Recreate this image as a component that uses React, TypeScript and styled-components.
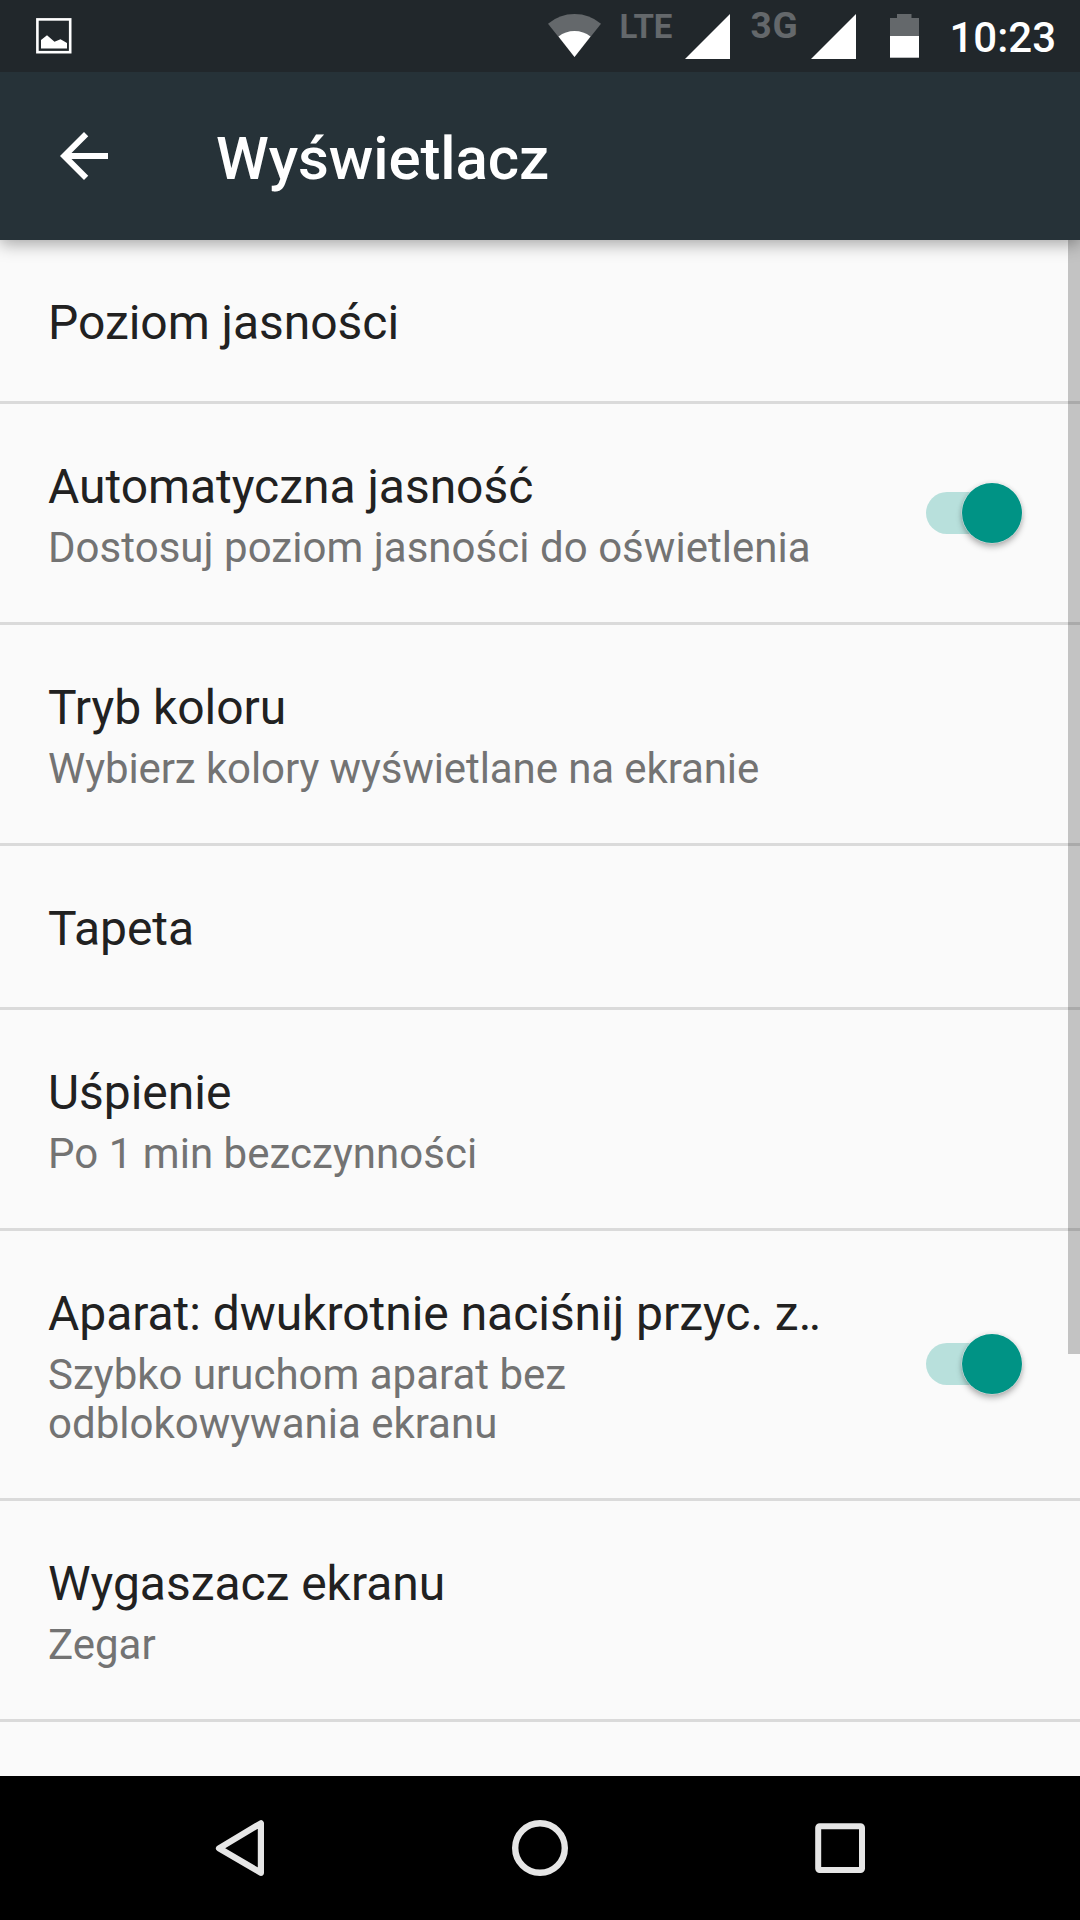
import React from 'react';
import styled, { createGlobalStyle } from 'styled-components';

const Global = createGlobalStyle`
  * { box-sizing: border-box; }
  body { margin: 0; background: #fafafa; }
  svg { display: block; flex: none; }
`;
const Screen = styled.div`
  width: 1080px; height: 1920px; display: flex; flex-direction: column;
  overflow: hidden; font-family: Roboto, sans-serif; background: #fafafa;
`;
const StatusBar = styled.header`
  height: 72px; flex: none; background: #21272b; display: flex;
  justify-content: space-between; padding: 0 24px 0 36px; position: relative; z-index: 2;
`;
const StatusGroup = styled.div`display: flex; align-items: flex-start;`;
const Network = styled.span<{ $size: number; $top: number; $left: number; $width: number; $track: number }>`
  font-size: ${p => p.$size}px; line-height: 40px; font-weight: 700; color: #64686b;
  letter-spacing: ${p => p.$track}px; margin: ${p => p.$top}px 0 0 ${p => p.$left}px;
  width: ${p => p.$width}px; white-space: nowrap;
`;
const Clock = styled.span`
  font-size: 42px; font-weight: 500; color: #fff; line-height: 49px; margin: 13px 0 0 30px;
`;
const Glyph = styled.svg<{ $top: number; $left?: number }>`
  margin-top: ${p => p.$top}px; margin-left: ${p => p.$left ?? 0}px;
`;
const Toolbar = styled.div`
  height: 168px; flex: none; background: #263238; display: flex; align-items: center;
  padding-left: 48px; box-shadow: 0 4px 16px rgba(0,0,0,.35); position: relative; z-index: 1;
`;
const Title = styled.h1`
  margin: 0 0 0 96px; padding-top: 6px; font-size: 60px; line-height: 70px; font-weight: 500;
  color: #fff; letter-spacing: -0.1px;
`;
const Body = styled.main`flex: 1; min-height: 0; overflow: hidden; position: relative;`;
const ScrollThumb = styled.div`
  position: absolute; top: 0; right: 0; width: 12px; height: 1114px; background: rgba(0,0,0,.22);
`;
const Row = styled.section<{ $h: number }>`
  height: ${p => p.$h}px; border-bottom: 3px solid #dadada; display: flex;
  align-items: center; justify-content: space-between; padding: 0 58px 0 48px;
`;
const Texts = styled.div`display: flex; flex-direction: column; gap: 8px; padding-top: 4px;`;
const Label = styled.div`font-size: 48px; line-height: 56px; color: #212121; white-space: nowrap; letter-spacing: -0.04px;`;
const Dots = styled.span`letter-spacing: -2.6px;`;
const Note = styled.div<{ $track?: number }>`
  font-size: 42px; line-height: 49px; color: #737373; white-space: pre-line;
  letter-spacing: ${p => p.$track ?? 0}px;
`;
const Track = styled.div`
  width: 96px; height: 42px; border-radius: 21px; background: #b8e0dc; flex: none;
  display: flex; align-items: center; justify-content: flex-end; margin-bottom: 1px;
`;
const Thumb = styled.div`
  width: 60px; height: 60px; border-radius: 50%; background: #009385; flex: none;
  box-shadow: 0 0 0 0.5px rgba(255,255,255,.6), 0 4px 6px rgba(0,0,0,.28), 0 0 5px rgba(0,0,0,.12);
`;
const NavBar = styled.nav`
  height: 144px; flex: none; background: #000; display: flex; align-items: center;
  justify-content: center; gap: 228px;
`;

type Item = { label: string; dots?: boolean; note?: string; track?: number; h: number; on?: boolean };
const items: Item[] = [
  { label: 'Poziom jasności', h: 164 },
  { label: 'Automatyczna jasność', note: 'Dostosuj poziom jasności do oświetlenia', track: 0.03, h: 221, on: true },
  { label: 'Tryb koloru', note: 'Wybierz kolory wyświetlane na ekranie', track: -0.1, h: 221 },
  { label: 'Tapeta', h: 164 },
  { label: 'Uśpienie', note: 'Po 1 min bezczynności', track: 0.03, h: 221 },
  { label: 'Aparat: dwukrotnie naciśnij przyc. z', dots: true, note: 'Szybko uruchom aparat bez\nodblokowywania ekranu', h: 270, on: true },
  { label: 'Wygaszacz ekranu', note: 'Zegar', h: 221 },
];

const Signal = ({ left }: { left: number }) => (
  <Glyph $top={14} $left={left} width="45" height="45" viewBox="0 0 45 45">
    <path d="M45 0V45H0Z" fill="#fff" />
  </Glyph>
);

export default function App() {
  return (
    <Screen>
      <Global />
      <StatusBar>
        <StatusGroup>
          <Glyph $top={18} width="36" height="36" viewBox="0 0 36 36">
            <rect x="1.4" y="1.4" width="32.8" height="32.8" fill="none" stroke="#fff" strokeWidth="2.6" />
            <path d="M5 30.5V22L11 17.2 18.5 23.7 24.5 21.3 31 25V30.5Z" fill="#fff" />
          </Glyph>
        </StatusGroup>
        <StatusGroup>
          <Glyph $top={14} width="53" height="43" viewBox="0 0 53 43">
            <path d="M26.5 43L0 9.7Q11.5 0 26.5 0T53 9.7Z" fill="#64686b" />
            <path d="M26.5 43L10.5 22.5Q17.5 17 26.5 17T42.5 22.5Z" fill="#fff" />
          </Glyph>
          <Network $size={33} $top={7} $left={18} $width={54} $track={-0.2}>LTE</Network>
          <Signal left={12} />
          <Network $size={37} $top={6} $left={20} $width={49} $track={0.8}>3G</Network>
          <Signal left={12} />
          <Glyph $top={14} $left={34} width="29" height="44" viewBox="0 0 29 44">
            <path d="M7 0H21.5V4H29V22H0V4H7Z" fill="#64686b" />
            <path d="M0 22H29V43.7H0Z" fill="#fff" />
          </Glyph>
          <Clock>10:23</Clock>
        </StatusGroup>
      </StatusBar>
      <Toolbar>
        <svg width="72" height="72" viewBox="0 0 24 24" fill="#fff">
          <path d="M20 11H7.83l5.59-5.59L12 4l-8 8 8 8 1.41-1.41L7.83 13H20v-2z" />
        </svg>
        <Title>Wyświetlacz</Title>
      </Toolbar>
      <Body>
        {items.map(item => (
          <Row key={item.label} $h={item.h}>
            <Texts>
              <Label>{item.label}{item.dots && <Dots>..</Dots>}</Label>
              {item.note && <Note $track={item.track}>{item.note}</Note>}
            </Texts>
            {item.on && <Track><Thumb /></Track>}
          </Row>
        ))}
        <ScrollThumb />
      </Body>
      <NavBar>
        <svg width="72" height="72" viewBox="0 0 72 72" fill="none" stroke="#e6e6e6" strokeWidth="6.2" strokeLinejoin="round">
          <path d="M15 36.3L56.9 11.3V60.8Z" />
        </svg>
        <svg width="72" height="72" viewBox="0 0 72 72" fill="none" stroke="#e6e6e6" strokeWidth="6.4">
          <circle cx="36" cy="36" r="24.8" />
        </svg>
        <svg width="72" height="72" viewBox="0 0 72 72" fill="none" stroke="#e6e6e6" strokeWidth="6">
          <rect x="14.2" y="14.2" width="43.8" height="43.8" rx="1.5" />
        </svg>
      </NavBar>
    </Screen>
  );
}
